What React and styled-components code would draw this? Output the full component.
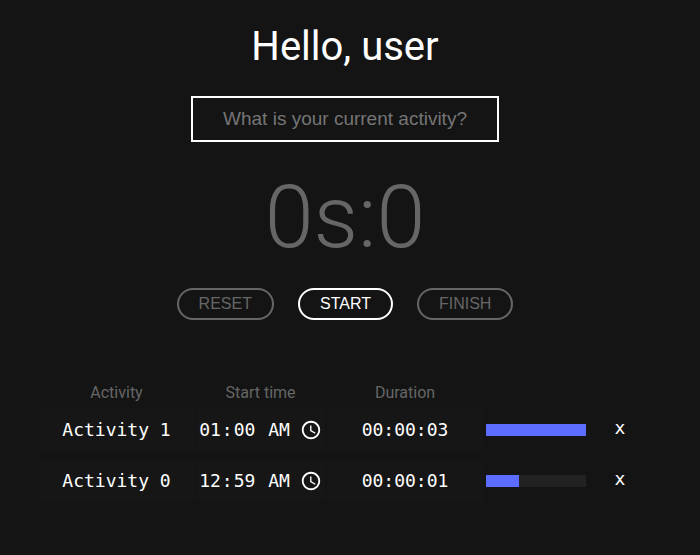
import React, { useState } from "react";
import styled, { createGlobalStyle } from "styled-components";

const GlobalStyle = createGlobalStyle`
  *, *::before, *::after { box-sizing: border-box; }
  html { background: #141414; color-scheme: dark; }
  body {
    margin: 0;
    background: #141414;
    color: #fff;
    font-family: Roboto, "Liberation Sans", sans-serif;
    font-size: 16px;
  }
`;

const Page = styled.main`
  display: flex;
  flex-direction: column;
  align-items: center;
  padding: 20px 10px 48px 0;
`;

const Title = styled.h1`
  margin: 0 0 22px;
  font-size: 40px;
  line-height: 54px;
  font-weight: 400;
`;

const ActivityInput = styled.input`
  width: 308px;
  max-width: 100%;
  height: 46px;
  padding: 0 20px;
  border: 2px solid #fff;
  border-radius: 0;
  background: transparent;
  color: #fff;
  font: 19px "Liberation Sans", Arial, sans-serif;
  text-align: center;
  &::placeholder { color: #757575; opacity: 1; }
`;

const Timer = styled.div`
  margin: 20px 0 16px;
  font-size: 88px;
  line-height: 110px;
  font-weight: 300;
  color: #666;
`;

const Controls = styled.div`
  display: flex;
  gap: 24px;
`;

const ControlButton = styled.button`
  height: 32px;
  padding: 0 20px;
  border: 2px solid currentColor;
  border-radius: 16px;
  background: transparent;
  color: ${({ $active }) => ($active ? "#fff" : "#666")};
  font: 16px "Liberation Sans", Arial, sans-serif;
`;

const Log = styled.table`
  margin-top: 60px;
  border-collapse: separate;
  border-spacing: 2px 0;
  table-layout: fixed;
  width: 616px;
  max-width: 100%;
`;

const Column = styled.col`
  width: ${({ $width }) => $width}px;
`;

const Heading = styled.th`
  height: 24px;
  padding: 0;
  font-weight: 400;
  color: #666;
`;

const Cell = styled.td`
  height: 51px;
  padding: 0;
  text-align: center;
`;

const Field = styled.input`
  display: block;
  width: 100%;
  height: 41px;
  padding: 0;
  border: 0;
  background: #161616;
  color: #fff;
  font: 18px "DejaVu Sans Mono", monospace;
  text-align: center;
`;

const TimeField = styled(Field)`
  padding: 0 2px;
  &::-webkit-calendar-picker-indicator {
    width: 22px;
    height: 22px;
    padding: 1px;
    margin-left: 8px;
  }
`;

const Track = styled.div`
  width: 100px;
  height: 12px;
  margin: 0 auto;
  background: #222;
`;

const Fill = styled.div`
  height: 100%;
  background: #5c6cff;
`;

const RemoveButton = styled.button`
  padding: 0 8px 4px;
  border: 0;
  background: transparent;
  color: #fff;
  font: 18px "DejaVu Sans Mono", monospace;
`;

const entries = [
  { id: 1, name: "Activity 1", start: "01:00", duration: "00:00:03", seconds: 3 },
  { id: 0, name: "Activity 0", start: "00:59", duration: "00:00:01", seconds: 1 },
];

const longest = Math.max(...entries.map((entry) => entry.seconds));

export default function App() {
  const [rows, setRows] = useState(entries);
  return (
    <>
      <GlobalStyle />
      <Page>
        <Title>Hello, user</Title>
        <ActivityInput type="text" aria-label="Current activity" placeholder="What is your current activity?" />
        <Timer role="timer">0s:0</Timer>
        <Controls>
          <ControlButton type="button">RESET</ControlButton>
          <ControlButton type="button" $active>START</ControlButton>
          <ControlButton type="button">FINISH</ControlButton>
        </Controls>
        <Log>
          <colgroup>
            <Column $width={155} />
            <Column $width={129} />
            <Column $width={156} />
            <Column $width={102} />
            <Column />
          </colgroup>
          <thead>
            <tr>
              <Heading scope="col">Activity</Heading>
              <Heading scope="col">Start time</Heading>
              <Heading scope="col">Duration</Heading>
              <td />
              <td />
            </tr>
          </thead>
          <tbody>
            {rows.map((row) => (
              <tr key={row.id}>
                <Cell><Field type="text" aria-label="Activity" defaultValue={row.name} /></Cell>
                <Cell><TimeField type="time" aria-label="Start time" defaultValue={row.start} /></Cell>
                <Cell><Field type="text" aria-label="Duration" defaultValue={row.duration} /></Cell>
                <Cell>
                  <Track><Fill style={{ width: `${(row.seconds / longest) * 100}%` }} /></Track>
                </Cell>
                <Cell>
                  <RemoveButton
                    type="button"
                    aria-label={`x, remove ${row.name}`}
                    onClick={() => setRows(rows.filter((other) => other.id !== row.id))}
                  >
                    x
                  </RemoveButton>
                </Cell>
              </tr>
            ))}
          </tbody>
        </Log>
      </Page>
    </>
  );
}
